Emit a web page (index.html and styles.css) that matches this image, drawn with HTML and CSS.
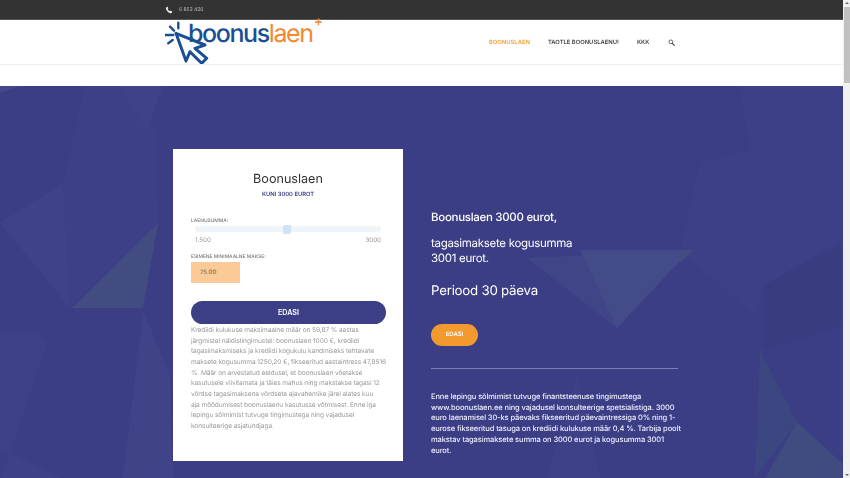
FILE: index.html
```html
<!DOCTYPE html>
<html lang="et">
<head>
<meta charset="utf-8">
<title>Boonuslaen</title>
<link rel="stylesheet" href="styles.css">
</head>
<body>
<div class="page">
  <div class="topbar">
    <svg class="phone" viewBox="0 0 24 24"><path d="M6.600 2.500 3.600 4.200c-1 .8-1.200 2.400-.7 4.200 1.600 5.600 6.900 11.300 12.300 13 1.900.6 3.500.3 4.400-.7l1.900-2.800c.3-.5.2-1-.3-1.400l-4.100-2.600c-.5-.3-1-.2-1.400.2l-1.400 1.700c-3.100-1.500-5.200-3.700-6.600-6.700l1.900-1.500c.4-.4.5-.9.2-1.400L8 2.800c-.4-.5-.9-.6-1.400-.3z"/></svg>
    <span class="tel">6 852 420</span>
  </div>
  <header class="header">
    <div class="logo">
      <svg class="cursor" viewBox="0 0 44 44">
        <g fill="none" stroke="#1b4f94" stroke-linecap="round">
          <path d="M13.300 2.700v5.600M0.500 15h7.800M3.300 23.300 7.700 20M5 6.700l4 4" stroke-width="2.400"/>
          <path d="M11 13.300 40 25 30 28.300 41.700 38.300 36.700 43.300 25 31.700 21 41z" stroke-width="3" stroke-linejoin="round"/>
        </g>
      </svg>
      <span class="logo-word"><span class="logo-blue">boonus</span><span class="logo-orange">laen</span><span class="logo-plus">+</span></span>
    </div>
    <nav class="nav">
      <a class="nav-link active">BOONUSLAEN</a>
      <a class="nav-link">TAOTLE BOONUSLAENU!</a>
      <a class="nav-link">KKK</a>
      <svg class="search" viewBox="0 0 16 16"><circle cx="6.500" cy="6.500" r="4.300" fill="none" stroke="#444" stroke-width="1.800"/><path d="M10 10l4.500 4.500" stroke="#444" stroke-width="2.600" stroke-linecap="round"/></svg>
    </nav>
  </header>
  <div class="gap"></div>
  <main class="hero">
    <svg class="hero-bg" viewBox="0 0 843 392" preserveAspectRatio="none">
      <polygon points="0,0 20,0 0,7" fill="#44478a"/>
      <polygon points="85,0 63,97 70,222 158,137 156,44 120,0" fill="#3d4086"/>
      <polygon points="0,137 63,97 70,222" fill="#3f4288"/>
      <polygon points="72,222 158,137 143,222" fill="#424c80"/>
      <polygon points="120,0 163,0 147,44" fill="#3f4288"/>
      <polygon points="143,224 170,290 173,392 123,392" fill="#404388"/>
      <polygon points="0,247 40,247 47,257 10,367 0,364" fill="#3e4187"/>
      <polygon points="10,367 60,392 0,392" fill="#3e4187"/>
      <polygon points="527,172 690,164 617,242" fill="#404587"/>
      <polygon points="580,164 690,164 617,242" fill="#434b88"/>
      <polygon points="547,392 577,289 600,392" fill="#3e4187"/>
      <polygon points="700,77 750,64 842,94 842,154 763,200 755,230 680,164" fill="#3d4086"/>
      <polygon points="740,0 842,0 842,94 750,64" fill="#3d4086"/>
      <polygon points="680,164 693,164 680,177" fill="#424c80"/>
      <polygon points="763,200 842,157 842,240 763,264" fill="#393c80"/>
      <polygon points="760,264 797,336 755,392" fill="#3c4681"/>
      <polygon points="797,336 842,377 842,392 765,392" fill="#404b80"/>
    </svg>
    <div class="hero-inner">
      <section class="card">
        <h1 class="card-title">Boonuslaen</h1>
        <p class="card-sub">KUNI 3000 EUROT</p>
        <label class="field-label">LAENUSUMMA:</label>
        <div class="slider"><span class="thumb"></span></div>
        <div class="slider-range"><span>1.500</span><span>3000</span></div>
        <label class="field-label second">ESIMENE MINIMAALNE MAKSE:</label>
        <div class="amount">75.00</div>
        <button class="submit">EDASI</button>
        <p class="legal">Krediidi kulukuse maksimaalne määr on 59,87 % aastas<br>järgmistel näidistingimustel: boonuslaen 1000 €, krediidi<br>tagasimaksmiseks ja krediidi kogukulu kandmiseks tehtavate<br>maksete kogusumma 1250,20 €, fikseeritud aastaintress 47,8516<br>%. Määr on arvestatud eeldusel, et boonuslaen võetakse<br>kasutusele viivitamata ja täies mahus ning makstakse tagasi 12<br>võrdse tagasimaksena võrdsete ajavahemike järel alates kuu<br>aja möödumisest boonuslaenu kasutusse võtmisest. Enne iga<br>lepingu sõlmimist tutvuge tingimustega ning vajadusel<br>konsulteerige asjatundjaga.</p>
      </section>
      <section class="info">
        <h2 class="info-head first">Boonuslaen 3000 eurot,</h2>
        <h2 class="info-head">tagasimaksete kogusumma<br>3001 eurot.</h2>
        <h2 class="info-period">Periood 30 päeva</h2>
        <a class="cta">EDASI</a>
        <hr class="rule">
        <p class="info-text">Enne lepingu sõlmimist tutvuge finantsteenuse tingimustega<br>www.boonuslaen.ee ning vajadusel konsulteerige spetsialistiga. 3000<br>euro laenamisel 30-ks päevaks fikseeritud päevaintressiga 0% ning 1-<br>eurose fikseeritud tasuga on krediidi kulukuse määr 0,4 %. Tarbija poolt<br>makstav tagasimaksete summa on 3000 eurot ja kogusumma 3001<br>eurot.</p>
      </section>
    </div>
  </main>
</div>
<div class="scrollbar"><span class="arrow up"></span><span class="scroll-thumb"></span><span class="arrow down"></span></div>
</body>
</html>
```
FILE: styles.css
```css
* { box-sizing: border-box; }
html, body { height: 100%; margin: 0; overflow: hidden; }
body { display: flex; width: 850px; height: 478px; font-family: "Inter", "Liberation Sans", sans-serif; background: #fff; text-rendering: geometricPrecision; }
.page { width: 843px; height: 478px; display: flex; flex-direction: column; overflow: hidden; }
.topbar { height: 20px; background: #333; display: flex; align-items: center; padding-left: 165px; gap: 6px; border-bottom: 1px solid #555; flex: none; }
.phone { width: 8px; height: 8px; fill: #eee; }
.tel { font-size: 5px; color: #bbb; will-change: transform; }
.header { height: 45px; flex: none; display: flex; justify-content: space-between; border-bottom: 1px solid #eee; padding-left: 165px; padding-right: 168px; }
.logo { display: flex; align-items: flex-start; width: 160px; }
.cursor { width: 44px; height: 44px; flex: none; }
.logo-word { font-size: 25px; font-weight: 300; letter-spacing: -1.400px; line-height: 30px; margin-left: -21px; margin-top: -1px; white-space: nowrap; position: relative; }
.logo-blue { color: #1b4f94; font-weight: 500; }
.logo-orange { color: #f28a30; font-weight: 400; }
.logo-plus { color: #f28a30; position: absolute; left: 100%; top: -12px; margin-left: 1px; font-size: 14px; font-weight: 500; }
.nav { display: flex; align-items: center; gap: 18px; padding-top: 1px; }
.nav-link { font-size: 5.850px; font-weight: 600; color: #444; white-space: nowrap; will-change: transform; }
.nav-link.active { color: #f2a33d; }
.search { width: 7px; height: 7px; margin-left: 1px; }
.gap { height: 21px; flex: none; background: #fff; }
.hero { flex: 1; position: relative; background: #3b3e84; overflow: hidden; }
.hero-bg { position: absolute; inset: 0; width: 100%; height: 100%; }
.hero-inner { position: relative; display: grid; grid-template-columns: 230px 247px; column-gap: 28px; padding: 63px 0 0 173px; }
.card { background: #fff; height: 312px; padding: 23px 18px 0 18px; }
.card-title { margin: 0; text-align: center; font-size: 12.600px; line-height: 16px; font-weight: 400; color: #333; will-change: transform; }
.card-sub { margin: 3px 0 0; text-align: center; font-size: 5.800px; line-height: 8px; font-weight: 600; color: #3c3f85; will-change: transform; }
.field-label { display: block; margin-top: 19px; font-size: 4.900px; line-height: 7px; font-weight: 500; color: #777; will-change: transform; }
.field-label.second { margin-top: 9px; }
.slider { height: 6px; margin: 1px 4px 0 4px; background: #eef4f8; border-radius: 3px; position: relative; }
.thumb { position: absolute; left: 88px; top: -1.500px; width: 8px; height: 9px; background: #cfe3f2; border-radius: 2px; }
.slider-range { display: flex; justify-content: space-between; margin: 4px 4px 0 4px; font-size: 6.200px; line-height: 9px; color: #999; will-change: transform; }
.amount { width: 49px; height: 21px; margin-top: 1px; background: #fbca96; color: #8a6a4a; font-size: 6px; font-weight: 500; line-height: 21px; padding-left: 9px; }
.submit { display: block; width: 195px; height: 23px; margin-top: 18px; border: 0; border-radius: 12px; background: #3c3f85; color: #fff; font: 600 7.200px "Inter", "Liberation Sans", sans-serif; will-change: transform; }
.legal { margin: 1px 0 0; font-size: 6.600px; letter-spacing: -.1px; line-height: 10.650px; color: #9a9a9a; white-space: nowrap; will-change: transform; }
.info { color: #fff; padding-top: 61px; }
.info-head { margin: 0 0 11px; font-size: 11.500px; letter-spacing: -.3px; line-height: 15px; font-weight: 400; will-change: transform; }
.info-head.first { font-weight: 500; }
.info-period { margin: 16px 0 0; font-size: 13.300px; letter-spacing: -.25px; line-height: 18px; font-weight: 400; will-change: transform; }
.cta { display: block; width: 47px; height: 22px; margin-top: 24px; border-radius: 11px; background: #f39a2e; color: #fff; font-size: 6px; font-weight: 600; line-height: 22px; text-align: center; will-change: transform; }
.rule { height: 1px; margin: 22px 0 0; border: 0; background: #7d80b0; }
.info-text { margin: 23px 0 0; font-size: 7.500px; letter-spacing: -.1px; line-height: 10.700px; font-weight: 500; color: #eef; white-space: nowrap; will-change: transform; }
.scrollbar { width: 7px; height: 478px; background: #f1f1f1; display: flex; flex-direction: column; align-items: center; }
.arrow { width: 0; height: 0; border-left: 2px solid transparent; border-right: 2px solid transparent; flex: none; margin: 2px 0; }
.arrow.up { border-bottom: 2px solid #666; }
.arrow.down { border-top: 2px solid #666; margin-top: auto; }
.scroll-thumb { width: 6px; height: 76px; background: #c1c1c1; flex: none; margin-top: 1px; }
```
